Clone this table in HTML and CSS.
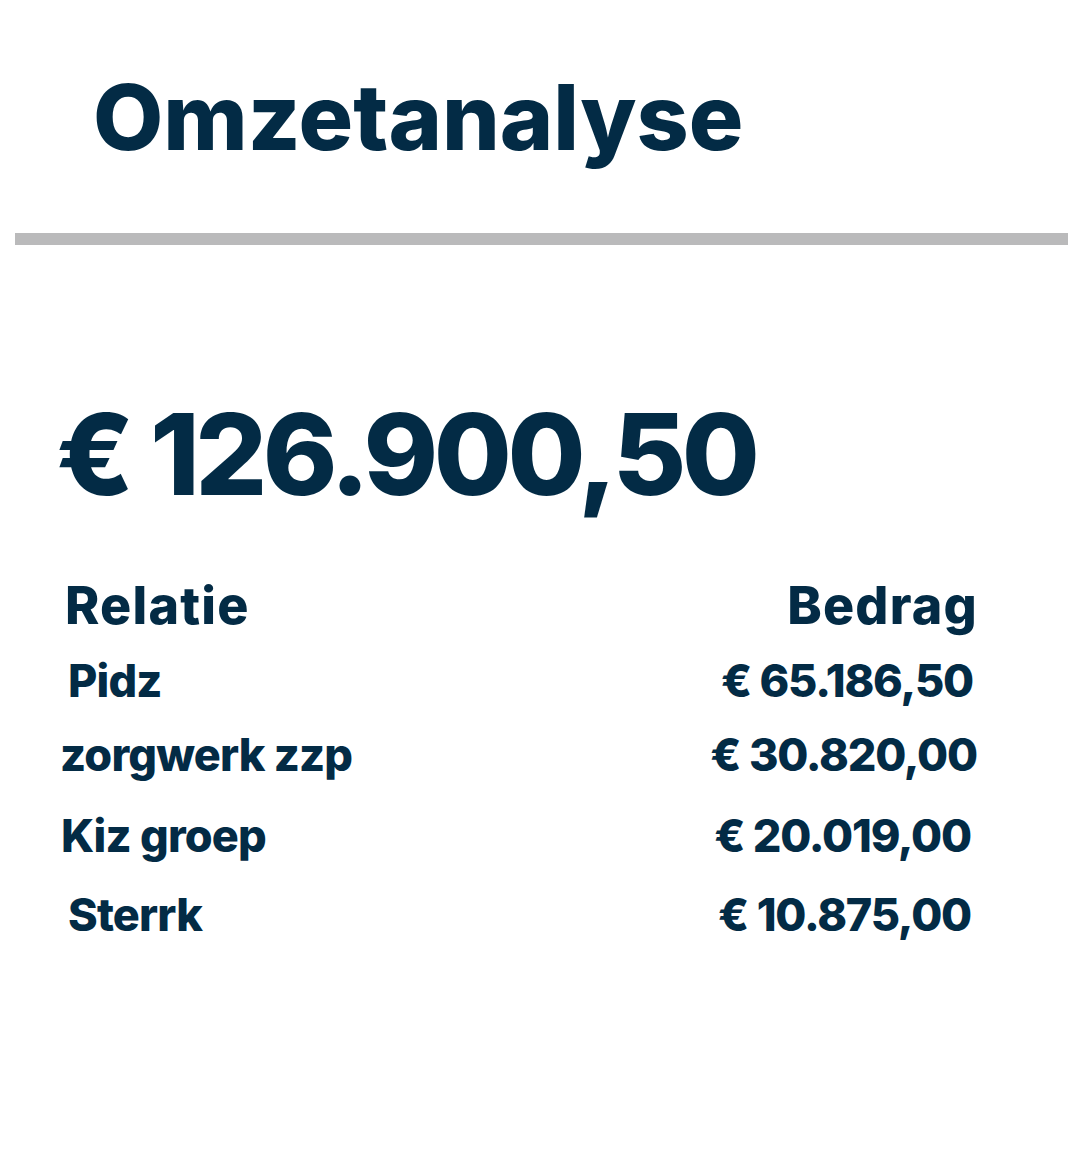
FILE: index.html
```html
<!DOCTYPE html>
<html lang="nl">
<head>
<meta charset="utf-8">
<title>Omzetanalyse</title>
<link rel="stylesheet" href="styles.css">
</head>
<body>
<main class="page">
  <h1 class="title">Omzetanalyse</h1>
  <div class="divider"></div>
  <p class="total">€ 126.900,50</p>
  <div class="table">
    <div class="row head"><span class="name">Relatie</span><span class="amount">Bedrag</span></div>
    <div class="row r1"><span class="name">Pidz</span><span class="amount">€ 65.186,50</span></div>
    <div class="row r2"><span class="name">zorgwerk zzp</span><span class="amount">€ 30.820,00</span></div>
    <div class="row r3"><span class="name">Kiz groep</span><span class="amount">€ 20.019,00</span></div>
    <div class="row r4"><span class="name">Sterrk</span><span class="amount">€ 10.875,00</span></div>
  </div>
</main>
</body>
</html>
```
FILE: styles.css
```css
html, body {
  margin: 0;
  padding: 0;
  background: #ffffff;
}
.page {
  width: 1068px;
  height: 1159px;
  font-family: Inter, "Liberation Sans", sans-serif;
  font-weight: 800;
  color: #032b45;
  display: flex;
  flex-direction: column;
}
.title {
  margin: 0;
  padding: 72px 0 0 93px;
  font-size: 91px;
  line-height: 91px;
  font-weight: 800;
}
.divider {
  margin: 70px 0 0 15px;
  height: 12px;
  background: #bababb;
}
.total {
  margin: 153px 0 0 56px;
  font-size: 113px;
  line-height: 113px;
  letter-spacing: -4.5px;
}
.table {
  display: flex;
  flex-direction: column;
  padding-top: 65px;
}
.row {
  display: flex;
  justify-content: space-between;
  align-items: baseline;
  line-height: 60px;
  font-size: 45px;
  letter-spacing: -0.8px;
}
.row .amount {
  letter-spacing: -1.2px;
}
.row.head .amount,
.head {
  letter-spacing: 1.2px;
}
.head {
  height: 75px;
  font-size: 52px;
  padding: 0 90px 0 65px;
}
.r1 {
  height: 74px;
  padding: 0 95px 0 68px;
}
.r2 {
  height: 81px;
  padding: 0 91px 0 60px;
}
.r3 {
  height: 79px;
  padding: 0 97px 0 61px;
}
.r4 {
  height: 79px;
  padding: 0 97px 0 68px;
}
```
